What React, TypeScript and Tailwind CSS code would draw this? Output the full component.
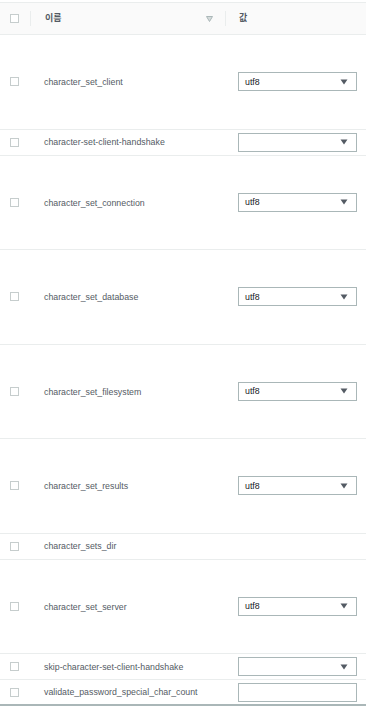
import React from "react";

type Row = { name: string; tall: boolean; kind: "select" | "empty-select" | "none" | "input"; value?: string };

const rows: Row[] = [
  { name: "character_set_client", tall: true, kind: "select", value: "utf8" },
  { name: "character-set-client-handshake", tall: false, kind: "empty-select" },
  { name: "character_set_connection", tall: true, kind: "select", value: "utf8" },
  { name: "character_set_database", tall: true, kind: "select", value: "utf8" },
  { name: "character_set_filesystem", tall: true, kind: "select", value: "utf8" },
  { name: "character_set_results", tall: true, kind: "select", value: "utf8" },
  { name: "character_sets_dir", tall: false, kind: "none" },
  { name: "character_set_server", tall: true, kind: "select", value: "utf8" },
  { name: "skip-character-set-client-handshake", tall: false, kind: "empty-select" },
  { name: "validate_password_special_char_count", tall: false, kind: "input" },
];

function Checkbox() {
  return <div className="w-[9px] h-[9px] border border-[#c6cdcd] bg-white" />;
}

function Caret() {
  return (
    <svg width="8" height="6" viewBox="0 0 8 6" className="shrink-0">
      <path d="M0.5 0.5 H7.5 L4 5.5 Z" fill="#545b64" />
    </svg>
  );
}

function Select({ value }: { value?: string }) {
  return (
    <div className="w-[119px] h-[19px] border border-[#aab7b8] bg-white flex items-center justify-between pl-[6px] pr-[8px]">
      <span className="text-[8.8px] text-[#16191f] pt-px">{value ?? ""}</span>
      <Caret />
    </div>
  );
}

export default function App() {
  return (
    <div
      className="w-[366px] h-[710px] bg-white pt-[2px] overflow-hidden"
      style={{ fontFamily: '"Liberation Sans", "Noto Sans CJK KR", sans-serif' }}
    >
      <div className="border-t border-[#eaeded]">
        <div className="h-[32px] bg-[#fafafa] border-b border-[#eaeded] flex items-center">
          <div className="w-[31px] h-full flex items-center pl-[10px] relative">
            <Checkbox />
            <div className="absolute right-0 top-[8px] h-[15px] w-px bg-[#eaeded]" />
          </div>
          <div className="w-[195px] h-full flex items-center justify-between pl-[14px] pr-[13px] relative">
            <span className="text-[9px] text-[#545b64] font-semibold">이름</span>
            <svg width="7" height="6" viewBox="0 0 7 6">
              <path d="M0.5 0.5 H6.5 L3.5 5.5 Z" fill="#d5dbdb" stroke="#aab7b8" strokeWidth="1" />
            </svg>
            <div className="absolute right-0 top-[8px] h-[15px] w-px bg-[#eaeded]" />
          </div>
          <div className="flex-1 h-full flex items-center pl-[13px]">
            <span className="text-[9px] text-[#545b64] font-semibold">값</span>
          </div>
        </div>
        {rows.map((r, i) => (
          <div
            key={i}
            className={`flex items-center border-b ${i === rows.length - 1 ? "border-b-2 border-[#aab7b8]" : "border-[#eaeded]"} ${r.tall ? "h-[94.5px]" : "h-[26px]"}`}
          >
            <div className="w-[31px] pl-[10px] flex items-center">
              <Checkbox />
            </div>
            <div className="w-[195px] pl-[13px] pt-[2px] text-[8.8px] text-[#545b64]">{r.name}</div>
            <div className="flex-1 pl-[12px]">
              {r.kind === "select" && <Select value={r.value} />}
              {r.kind === "empty-select" && <Select />}
              {r.kind === "input" && <div className="w-[119px] h-[19px] border border-[#aab7b8] bg-white" />}
            </div>
          </div>
        ))}
      </div>
    </div>
  );
}
